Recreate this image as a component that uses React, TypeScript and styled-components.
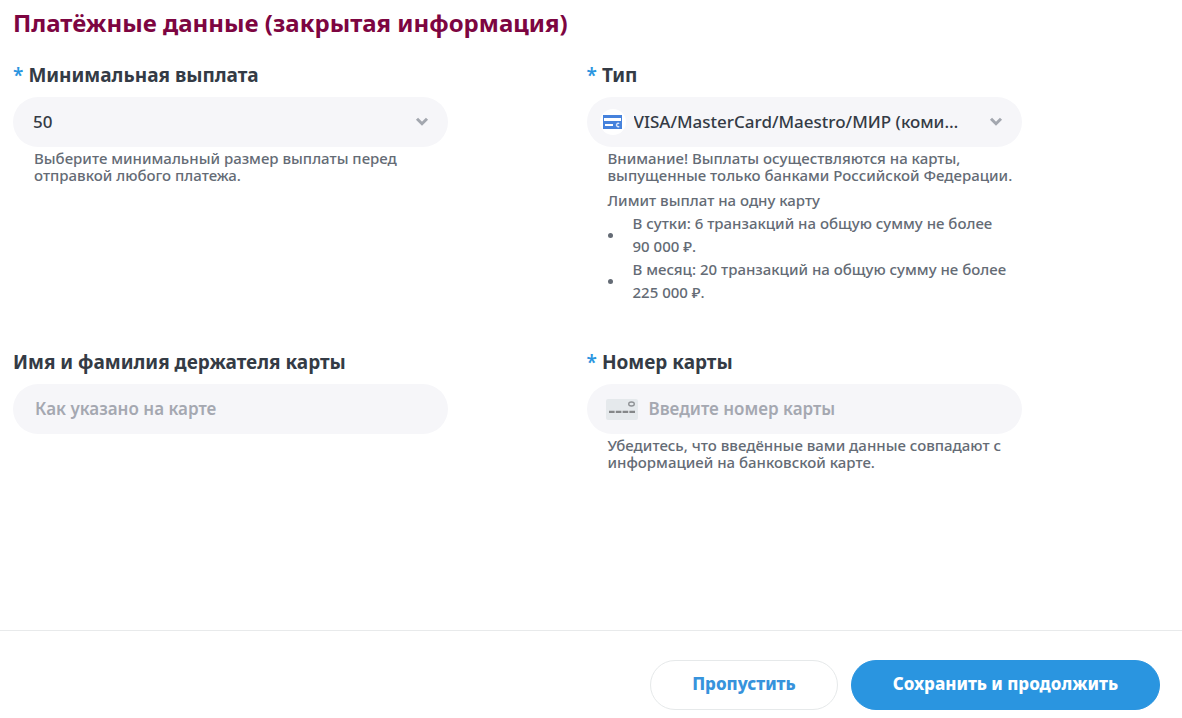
import React from "react";
import styled, { createGlobalStyle } from "styled-components";

const GlobalStyle = createGlobalStyle`
  *, *::before, *::after { box-sizing: border-box; }
  body {
    margin: 0;
    background: #fff;
    font-family: "Noto Sans", "Open Sans", sans-serif;
    color: #343b45;
  }
`;

const Page = styled.form`
  display: flex;
  flex-direction: column;
  min-height: 100vh;
`;

const Section = styled.section`
  flex: 1;
  padding: 7px 22px 24px 13px;
`;

const Title = styled.h1`
  margin: 0 0 22px;
  font-size: 24px;
  line-height: 32px;
  font-weight: 700;
  color: #7d0541;
`;

const Fields = styled.div`
  display: grid;
  grid-template-columns: repeat(2, minmax(0, 1fr));
  row-gap: 44px;
`;

const Field = styled.div`
  width: 100%;
  max-width: 435px;
`;

const Label = styled.label`
  display: block;
  margin-bottom: 8px;
  font-size: 19px;
  line-height: 28px;
  font-weight: 700;
`;

const Required = styled.span`
  margin-right: 5px;
  font-weight: 600;
  color: #2a95e0;
`;

const Control = styled.div`
  display: flex;
  align-items: center;
  height: 50px;
  padding: 0 19px;
  border-radius: 25px;
  background: #f6f6f9;
  &:focus-within { box-shadow: 0 0 0 2px #2a95e0; }
`;

const Select = styled.select`
  appearance: none;
  flex: 1;
  min-width: 0;
  height: 100%;
  margin: 0 -14px 0 0;
  padding: 0 38px 0 1px;
  border: 0;
  outline: 0;
  background: transparent;
  color: inherit;
  font: 500 17px/24px "Noto Sans", "Open Sans", sans-serif;
  text-overflow: ellipsis;
  cursor: pointer;
`;

const Input = styled.input`
  flex: 1;
  min-width: 0;
  height: 100%;
  padding: 0 3px 2px;
  border: 0;
  outline: 0;
  background: transparent;
  color: inherit;
  font: 600 17px/24px "Noto Sans", "Open Sans", sans-serif;
  &::placeholder { color: #a5a8b1; opacity: 1; }
`;

const Arrow = styled.svg`
  flex: none;
  width: 14px;
  height: 10px;
  pointer-events: none;
`;

const IconDisc = styled.span`
  display: flex;
  flex: none;
  align-items: center;
  justify-content: center;
  width: 26px;
  height: 26px;
  margin: 0 7px 0 -6px;
  border-radius: 50%;
  background: #fff;
`;

const CardBlank = styled.svg`
  flex: none;
  width: 32px;
  height: 21px;
  margin-right: 8px;
`;

const Help = styled.div`
  padding: 3px 0 0 21px;
  font-size: 15px;
  line-height: 17px;
  font-weight: 500;
  color: #646b75;
`;

const HelpText = styled.p`
  margin: 0 0 8px;
`;

const Limits = styled.ul`
  display: flex;
  flex-direction: column;
  margin: -5px 0 0;
  padding: 0;
  list-style: none;
`;

const Limit = styled.li`
  display: flex;
  align-items: center;
  gap: 20px;
  line-height: 23px;
  &::before {
    content: "";
    flex: none;
    width: 5px;
    height: 5px;
    border-radius: 50%;
    background: #646b75;
  }
`;

const Footer = styled.footer`
  display: flex;
  justify-content: flex-end;
  gap: 13px;
  padding: 29px 22px 8px;
  border-top: 1px solid #e8eaeb;
`;

const Button = styled.button<{ $primary?: boolean }>`
  height: 50px;
  padding: 0 41px 2px;
  border: 1px solid ${(p) => (p.$primary ? "#2a95e0" : "#e6e9ea")};
  border-radius: 25px;
  background: ${(p) => (p.$primary ? "#2a95e0" : "#fff")};
  color: ${(p) => (p.$primary ? "#fff" : "#3793dc")};
  font: 800 17px/24px "Noto Sans", "Open Sans", sans-serif;
  cursor: pointer;
`;

const Chevron = () => (
  <Arrow viewBox="0 0 14 10" aria-hidden="true">
    <path d="M2 1.7 7 6.7 12 1.7" fill="none" stroke="#a3a7af" strokeWidth="3" />
  </Arrow>
);

const Star = () => <Required aria-hidden="true">*</Required>;

export default function App() {
  return (
    <>
      <GlobalStyle />
      <Page onSubmit={(e) => e.preventDefault()}>
        <Section>
          <Title>Платёжные данные (закрытая информация)</Title>
          <Fields>
            <Field>
              <Label htmlFor="minimum"><Star />Минимальная выплата</Label>
              <Control>
                <Select id="minimum" aria-describedby="minimum-help" required>
                  <option>50</option>
                </Select>
                <Chevron />
              </Control>
              <Help id="minimum-help">
                <HelpText>Выберите минимальный размер выплаты перед отправкой любого платежа.</HelpText>
              </Help>
            </Field>

            <Field>
              <Label htmlFor="type"><Star />Тип</Label>
              <Control>
                <IconDisc>
                  <svg width="19" height="14" viewBox="0 0 19 14" aria-hidden="true">
                    <rect width="19" height="14" fill="#4682dc" />
                    <rect x="1" y="3" width="17" height="3" fill="#fff" />
                    <rect x="2" y="9" width="8" height="2" fill="#fff" />
                    <path d="M16.2 8.6a1.7 1.7 0 1 0 0 2.8" fill="none" stroke="#dbe7fa" strokeWidth="1.5" />
                  </svg>
                </IconDisc>
                <Select id="type" aria-describedby="type-help" required>
                  <option>VISA/MasterCard/Maestro/МИР (комиссия)</option>
                </Select>
                <Chevron />
              </Control>
              <Help id="type-help">
                <HelpText>Внимание! Выплаты осуществляются на карты, выпущенные только банками Российской Федерации.</HelpText>
                <HelpText>Лимит выплат на одну карту</HelpText>
                <Limits>
                  <Limit>В сутки: 6 транзакций на общую сумму не более 90&nbsp;000&nbsp;₽.</Limit>
                  <Limit>В месяц: 20 транзакций на общую сумму не более 225&nbsp;000&nbsp;₽.</Limit>
                </Limits>
              </Help>
            </Field>

            <Field>
              <Label htmlFor="holder">Имя и фамилия держателя карты</Label>
              <Control>
                <Input id="holder" type="text" placeholder="Как указано на карте" />
              </Control>
            </Field>

            <Field>
              <Label htmlFor="number"><Star />Номер карты</Label>
              <Control>
                <CardBlank viewBox="0 0 32 21" aria-hidden="true">
                  <rect width="32" height="21" rx="2" fill="#e5e9ec" />
                  <ellipse cx="25.5" cy="5" rx="2.8" ry="2" fill="none" stroke="#8d9093" strokeWidth="1.3" />
                  <path d="M3 12.8H29" stroke="#858789" strokeWidth="2.2" strokeDasharray="5.6 1.2" />
                </CardBlank>
                <Input id="number" type="text" inputMode="numeric" placeholder="Введите номер карты" aria-describedby="number-help" required />
              </Control>
              <Help id="number-help">
                <HelpText>Убедитесь, что введённые вами данные совпадают с информацией на банковской карте.</HelpText>
              </Help>
            </Field>
          </Fields>
        </Section>
        <Footer>
          <Button type="button">Пропустить</Button>
          <Button type="submit" $primary>Сохранить и продолжить</Button>
        </Footer>
      </Page>
    </>
  );
}
